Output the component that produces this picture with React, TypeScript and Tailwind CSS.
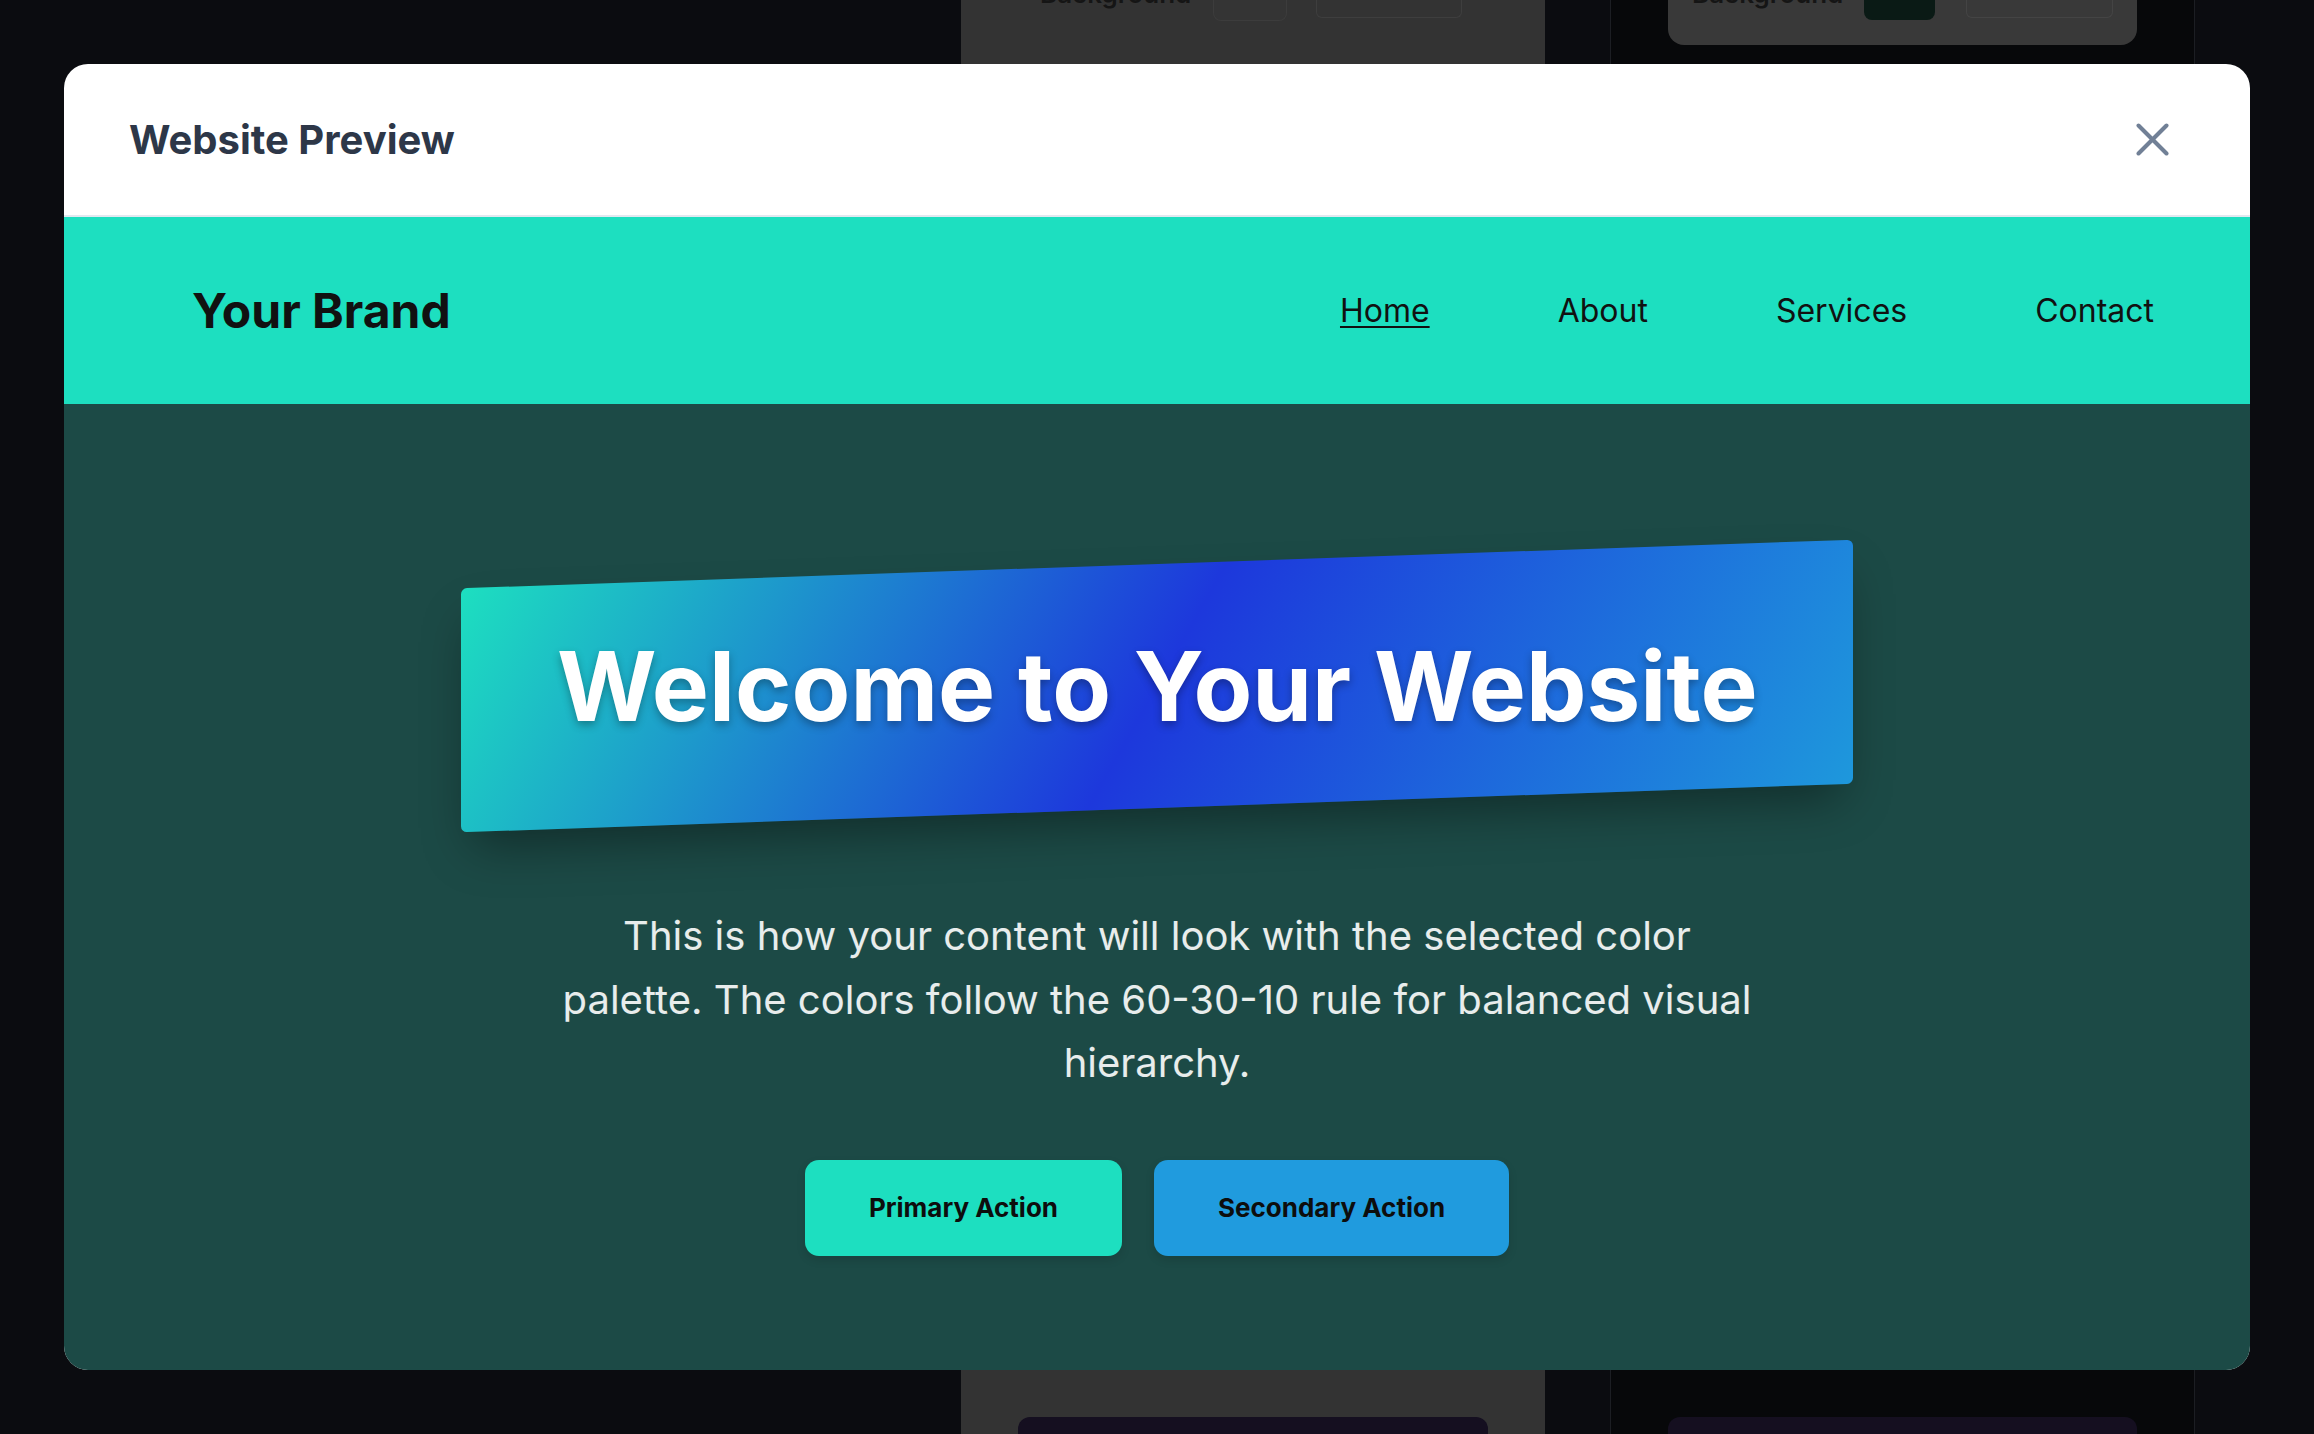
import React from "react";

function CloseIcon() {
  return (
    <svg width="33" height="33" viewBox="0 0 33 33" fill="none">
      <line x1="2.5" y1="2.5" x2="30.5" y2="30.5" stroke="#718096" strokeWidth="4" strokeLinecap="round" />
      <line x1="30.5" y1="2.5" x2="2.5" y2="30.5" stroke="#718096" strokeWidth="4" strokeLinecap="round" />
    </svg>
  );
}

export default function App() {
  return (
    <div className="relative w-[2314px] h-[1434px] overflow-hidden bg-[#0b0c10] font-['Inter','Noto_Sans',sans-serif]">
      {/* page behind the overlay */}
      <div className="flex h-full">
        <div className="w-[961px]" />
        <div className="w-[584px] bg-[#333333] flex flex-col">
          <div className="h-[24px] overflow-hidden flex items-start pl-[79px]">
            <div className="mt-[-19px] text-[26px] leading-[26px] font-semibold text-[#151515] w-[173px]">Background</div>
            <div className="w-[74px] h-[21px] rounded-b-[8px] bg-[#343434] border border-[#3c3c3c] border-t-0" />
            <div className="ml-[29px] w-[146px] h-[18px] rounded-b-[6px] border border-[#3e3e3e] border-t-0" />
          </div>
          <div className="flex-1" />
          <div className="mx-[57px] h-[17px] rounded-t-[12px] bg-[#150f20]" />
        </div>
        <div className="w-[65px]" />
        <div className="w-[585px] bg-[#07080a] border-x border-[#1c1e23] flex flex-col">
          <div className="ml-[57px] w-[469px] h-[45px] rounded-b-[16px] bg-[#393939] flex items-start pl-[24px]">
            <div className="mt-[-19px] text-[26px] leading-[26px] font-semibold text-[#151515] w-[172px]">Background</div>
            <div className="w-[71px] h-[20px] rounded-b-[8px] bg-[#0a1a15]" />
            <div className="ml-[31px] w-[147px] h-[18px] rounded-b-[6px] border border-[#444] border-t-0" />
          </div>
          <div className="flex-1" />
          <div className="mx-[57px] h-[17px] rounded-t-[12px] bg-[#150f20]" />
        </div>
      </div>

      {/* modal */}
      <div className="absolute left-[64px] top-[64px] w-[2186px] h-[1306px] rounded-[24px] overflow-hidden bg-white flex flex-col">
        <div className="h-[153px] shrink-0 flex items-center justify-between pl-[65px] pr-[81px] border-b-2 border-[#e2e8f0]">
          <h2 className="text-[40px] leading-none font-bold text-[#2d3748]">Website Preview</h2>
          <CloseIcon />
        </div>

        <nav className="h-[187px] shrink-0 bg-[#1ddfc0] flex items-center justify-between pl-[128px] pr-[96px]">
          <div className="text-[48px] leading-none font-bold text-[#111111]">Your Brand</div>
          <div className="flex gap-[128px] text-[32px] leading-none text-[#111111]">
            <span className="underline decoration-2 underline-offset-[4px]">Home</span>
            <span>About</span>
            <span>Services</span>
            <span>Contact</span>
          </div>
        </nav>

        <div className="flex-1 bg-[#1c4a46] flex flex-col items-center pt-[160px]">
          <div className="w-[1392px] h-[244px] -skew-y-2 rounded-[6px] bg-[linear-gradient(120deg,#1ddfc0_0%,#1d38dc_50%,#1e98dc_100%)] shadow-[0_25px_50px_-12px_rgba(0,0,0,0.4)] flex items-center justify-center">
            <h1 className="skew-y-2 text-[96px] leading-none font-bold text-white [text-shadow:0_4px_8px_rgba(0,0,0,0.3)]">
              Welcome to Your Website
            </h1>
          </div>

          <p className="mt-[96px] w-[1200px] text-center text-[40px] leading-[63.5px] text-white/90">
            This is how your content will look with the selected color palette. The colors follow the 60-30-10 rule for balanced visual hierarchy.
          </p>

          <div className="mt-[65px] flex gap-[32px]">
            <button className="h-[96px] px-[64px] rounded-[14px] bg-[#1ddfc0] text-[26px] font-bold text-[#0d0d0d] shadow-[0_4px_10px_rgba(0,0,0,0.12)]">
              Primary Action
            </button>
            <button className="h-[96px] px-[64px] rounded-[14px] bg-[#209bde] text-[26px] font-bold text-[#0d0d0d] shadow-[0_4px_10px_rgba(0,0,0,0.12)]">
              Secondary Action
            </button>
          </div>
        </div>
      </div>
    </div>
  );
}
